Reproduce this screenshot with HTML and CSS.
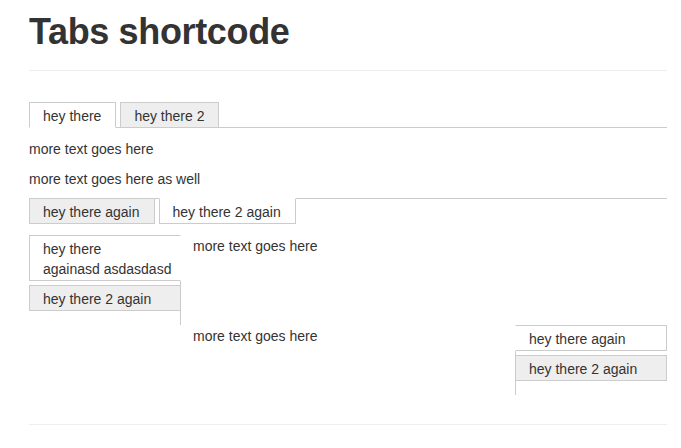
FILE: index.html
```html
<!DOCTYPE html>
<html lang="en">
<head>
<meta charset="utf-8">
<title>Tabs shortcode</title>
<link rel="stylesheet" href="styles.css">
</head>
<body>
<main class="page">
  <h1 class="title">Tabs shortcode</h1>
  <hr class="rule rule-top">

  <div class="tabs tabs-top">
    <ul class="tab-nav">
      <li class="tab active">hey there</li>
      <li class="tab">hey there 2</li>
    </ul>
    <div class="tab-panel"><p>more text goes here</p></div>
  </div>

  <div class="tabs tabs-bottom">
    <div class="tab-panel"><p>more text goes here as well</p></div>
    <ul class="tab-nav">
      <li class="tab">hey there again</li>
      <li class="tab active">hey there 2 again</li>
    </ul>
  </div>

  <div class="tabs tabs-left">
    <ul class="tab-nav">
      <li class="tab active">hey there<br>againasd asdasdasd</li>
      <li class="tab">hey there 2 again</li>
    </ul>
    <div class="tab-panel"><p>more text goes here</p></div>
  </div>

  <div class="tabs tabs-right">
    <div class="tab-panel"><p>more text goes here</p></div>
    <ul class="tab-nav">
      <li class="tab active">hey there again</li>
      <li class="tab">hey there 2 again</li>
    </ul>
  </div>

  <hr class="rule rule-bottom">
</main>
</body>
</html>
```

FILE: styles.css
```css
html, body {
  margin: 0;
  padding: 0;
  background: #fff;
}

body {
  font-family: "Liberation Sans", Arial, Helvetica, sans-serif;
  font-size: 14px;
  line-height: 20px;
  color: #333;
}

.page {
  width: 638px;
  padding: 12px 0 0 29px;
}

.title {
  margin: 0;
  font-size: 36px;
  line-height: 40px;
  font-weight: bold;
  letter-spacing: -0.35px;
  color: #333;
}

.rule {
  height: 0;
  border: 0;
  border-top: 1px solid #eee;
  margin: 0;
}

.rule-top {
  margin-top: 18px;
}

.rule-bottom {
  margin-top: 29px;
}

p {
  margin: 0;
}

.tab-nav {
  list-style: none;
  margin: 0;
  padding: 0;
  display: flex;
}

.tab {
  border: 1px solid #ccc;
  background: #eee;
  padding: 3px 14px 1px 13px;
  white-space: nowrap;
}

.tab.active {
  background: #fff;
}

/* top tabs */
.tabs-top {
  margin-top: 31px;
}

.tabs-top .tab-nav {
  border-bottom: 1px solid #ccc;
  gap: 4px;
}

.tabs-top .tab {
  margin-bottom: -1px;
}

.tabs-top .tab.active {
  border-bottom-color: #fff;
}

.tabs-top .tab-panel {
  padding-top: 11px;
}

/* bottom tabs */
.tabs-bottom .tab-panel {
  padding: 10px 0 9px;
}

.tabs-bottom .tab-nav {
  border-top: 1px solid #ccc;
  gap: 4px;
}

.tabs-bottom .tab {
  margin-top: -1px;
}

.tabs-bottom .tab.active {
  border-top-color: #fff;
}

/* vertical tabs */
.tabs-left,
.tabs-right {
  display: flex;
  align-items: flex-start;
}

.tabs-left {
  margin-top: 11px;
}

.tabs-left .tab-nav,
.tabs-right .tab-nav {
  flex-direction: column;
  gap: 4px;
  width: 151px;
  padding-bottom: 14px;
  flex: none;
}

.tabs-left .tab-nav {
  border-right: 1px solid #ccc;
}

.tabs-left .tab {
  margin-right: -1px;
}

.tabs-left .tab.active {
  border-right-color: #fff;
}

.tabs-left .tab-panel {
  flex: 1;
  padding: 1px 12px 0;
}

.tabs-right .tab-nav {
  border-left: 1px solid #ccc;
}

.tabs-right .tab {
  margin-left: -1px;
}

.tabs-right .tab.active {
  border-left-color: #fff;
}

.tabs-right .tab-panel {
  flex: 1;
  padding: 1px 12px 0 164px;
}
```
